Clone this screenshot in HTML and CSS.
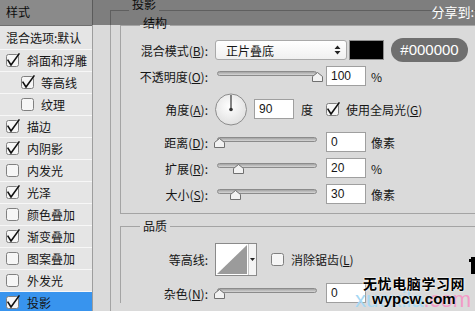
FILE: index.html
```html
<!DOCTYPE html>
<html lang="zh-CN">
<head>
    <meta charset="UTF-8">
    <meta name="viewport" content="width=device-width, initial-scale=1.0">
    <title>图层样式 - 投影</title>
    <link rel="stylesheet" href="styles.css">
</head>
<body>
    <div class="dialog">
        <div class="style-list">
            <div class="list-head">样式</div>
            <div class="list-row first">混合选项:默认</div>
            <div class="list-row"><span class="check on"></span>斜面和浮雕</div>
            <div class="list-row sub"><span class="check on"></span>等高线</div>
            <div class="list-row sub"><span class="check"></span>纹理</div>
            <div class="list-row"><span class="check on"></span>描边</div>
            <div class="list-row"><span class="check on"></span>内阴影</div>
            <div class="list-row"><span class="check"></span>内发光</div>
            <div class="list-row"><span class="check on"></span>光泽</div>
            <div class="list-row"><span class="check"></span>颜色叠加</div>
            <div class="list-row"><span class="check on"></span>渐变叠加</div>
            <div class="list-row"><span class="check"></span>图案叠加</div>
            <div class="list-row"><span class="check"></span>外发光</div>
            <div class="list-row selected"><span class="check on"></span>投影</div>
        </div>

        <div class="panel">
            <div class="group outer">
                <div class="group-title">投影</div>

                <div class="group inner">
                    <div class="group-title">结构</div>
                    <div class="rows">
                        <div class="row">
                            <span class="label">混合模式(<u>B</u>):</span>
                            <div class="select">
                                <span>正片叠底</span>
                                <svg class="select-arrows" width="7" height="10" viewBox="0 0 7 10">
                                    <path d="M3.5 0.5 L6.5 4 H0.5 Z M3.5 9.5 L6.5 6 H0.5 Z" fill="#222"/>
                                </svg>
                            </div>
                            <span class="swatch"></span>
                            <span class="hex">#000000</span>
                        </div>
                        <div class="row">
                            <span class="label">不透明度(<u>O</u>):</span>
                            <div class="slider" data-pos="100"></div>
                            <span class="field">100</span>
                            <span class="unit">%</span>
                        </div>
                        <div class="row tall">
                            <span class="label">角度(<u>A</u>):</span>
                            <svg class="dial" width="32" height="33" viewBox="0 0 32 33">
                                <defs>
                                    <radialGradient id="dial-fill" cx="0.45" cy="0.4" r="0.65">
                                        <stop offset="0" stop-color="#ffffff"/>
                                        <stop offset="1" stop-color="#dedede"/>
                                    </radialGradient>
                                </defs>
                                <circle cx="16" cy="16.5" r="15.5" fill="url(#dial-fill)" stroke="#8c8c8c"/>
                                <line x1="16" y1="16.5" x2="16" y2="2" stroke="#444" stroke-width="1.3"/>
                                <circle cx="16" cy="16.5" r="1.8" fill="#333"/>
                            </svg>
                            <span class="field">90</span>
                            <span class="unit">度</span>
                            <label class="option"><span class="check on"></span><span>使用全局光(<u>G</u>)</span></label>
                        </div>
                        <div class="row">
                            <span class="label">距离(<u>D</u>):</span>
                            <div class="slider" data-pos="2"></div>
                            <span class="field">0</span>
                            <span class="unit">像素</span>
                        </div>
                        <div class="row">
                            <span class="label">扩展(<u>R</u>):</span>
                            <div class="slider" data-pos="21"></div>
                            <span class="field">20</span>
                            <span class="unit">%</span>
                        </div>
                        <div class="row">
                            <span class="label">大小(<u>S</u>):</span>
                            <div class="slider" data-pos="18"></div>
                            <span class="field">30</span>
                            <span class="unit">像素</span>
                        </div>
                    </div>
                </div>

                <div class="group inner quality">
                    <div class="group-title">品质</div>
                    <div class="rows">
                        <div class="row contour">
                            <span class="label">等高线:</span>
                            <div class="contour-pick">
                                <svg width="32" height="31" viewBox="0 0 32 31">
                                    <path d="M1 30 L31 1 V30 Z" fill="#9b9b9b"/>
                                </svg>
                                <span class="contour-arrow">
                                    <svg width="5" height="3" viewBox="0 0 5 3"><path d="M0 0 H5 L2.5 3 Z" fill="#222"/></svg>
                                </span>
                            </div>
                            <label class="option"><span class="check"></span><span>消除锯齿(<u>L</u>)</span></label>
                        </div>
                        <div class="row">
                            <span class="label">杂色(<u>N</u>):</span>
                            <div class="slider" data-pos="2"></div>
                            <span class="field">0</span>
                        </div>
                    </div>
                </div>
            </div>
        </div>
    </div>

    <div class="share-bar">分享到:</div>

    <div class="wm-back">xuexila<span class="pink">.com</span></div>
    <div class="wm-cn">无忧电脑学习网</div>
    <div class="wm-en">wypcw.com</div>
    <svg class="wm-mark" width="7" height="17" viewBox="0 0 7 17">
        <path d="M2 0 H7 V17 H2 V5 H0 V2 H2 Z" fill="#000"/>
    </svg>

    <script>
        // Checkbox drawing, shared by the list and the options
        function checkbox(on) {
            const mark = on ? '<path d="M1.6 5.6 L5 11 L13.4 -0.6" fill="none" stroke="#111" stroke-width="1.6"/>' : '';
            return `<svg width="13" height="13" viewBox="0 0 13 13">
                <rect x="0.5" y="0.5" width="12" height="12" rx="2" fill="#f6f6f6" stroke="#808080"/>${mark}
            </svg>`;
        }

        document.querySelectorAll('.check').forEach(el => {
            el.innerHTML = checkbox(el.classList.contains('on'));
        });

        // Sliders: track plus a thumb placed from data-pos (percent)
        document.querySelectorAll('.slider').forEach(el => {
            const pos = Number(el.dataset.pos);
            el.innerHTML = `
                <div class="track"></div>
                <svg class="thumb" style="left: ${pos}%" width="11" height="10" viewBox="0 0 11 10">
                    <path d="M5.5 0.5 L10.5 4.5 V9.5 H0.5 V4.5 Z" fill="#f2f2f2" stroke="#707070"/>
                </svg>
            `;
        });
    </script>
</body>
</html>
```

FILE: styles.css
```css
* {
    box-sizing: border-box;
}
body {
    margin: 0;
    width: 475px;
    height: 311px;
    overflow: hidden;
    position: relative;
    background-color: #dadada;
    font-family: "Noto Sans CJK SC", "Liberation Sans", sans-serif;
    font-size: 12px;
    color: #161616;
}
.dialog {
    display: flex;
    height: 311px;
    overflow: hidden;
}

/* left list of layer styles */
.style-list {
    flex: none;
    width: 93px;
    background-color: #e5e5e5;
    border-right: 1px solid #9d9d9d;
}
.list-head {
    height: 26px;
    padding-left: 6px;
    line-height: 24px;
    background-color: #eeeeee;
    border-bottom: 1px solid #6f6f6f;
}
.list-row {
    display: flex;
    align-items: center;
    gap: 8px;
    height: 22px;
    padding-left: 6px;
    border-bottom: 1px solid #f7f7f7;
    white-space: nowrap;
}
.list-row.first {
    height: 24px;
}
.list-row.sub {
    padding-left: 21px;
    gap: 7px;
}
.list-row.selected {
    height: 20px;
    border-bottom: 0;
    background-color: #3894ee;
}
.check {
    display: block;
    flex: none;
    width: 13px;
    height: 13px;
}
.check svg {
    display: block;
    overflow: visible;
}

/* right settings panel */
.panel {
    flex: none;
    width: 400px;
    padding-left: 17px;
}
.group {
    border: 1px solid #a4a4a4;
}
.group.outer {
    margin-top: 10px;
    padding-left: 9px;
    height: 301px;
    border-right: 0;
    border-bottom: 0;
}
.group-title {
    width: max-content;
    padding: 0 3px;
    background-color: #dadada;
    line-height: 16px;
}
.outer > .group-title {
    margin: -14px 0 0 9px;
    line-height: 14px;
}
.inner {
    margin-top: 14px;
    padding-bottom: 9px;
}
.inner > .group-title {
    margin: -11px 0 0 19px;
}
.quality {
    margin-top: 12px;
    padding-bottom: 0;
    border-bottom: 0;
}
.quality > .group-title {
    margin-top: -9px;
}
.rows {
    display: flex;
    flex-direction: column;
    gap: 6px;
    padding-top: 9px;
}
.quality .rows {
    gap: 7px;
}
.row {
    display: flex;
    align-items: center;
    height: 20px;
    white-space: nowrap;
}
.row.tall {
    height: 34px;
}
.row.contour {
    height: 33px;
}
.label {
    flex: none;
    width: 87px;
    text-align: right;
}
.select {
    display: flex;
    align-items: center;
    justify-content: space-between;
    flex: none;
    width: 132px;
    height: 20px;
    margin-left: 7px;
    padding: 0 5px 0 10px;
    background: linear-gradient(#ffffff, #f0f0f0);
    border: 1px solid #a9a9a9;
    border-radius: 3px;
}
.swatch {
    flex: none;
    width: 35px;
    height: 20px;
    margin-left: 2px;
    background-color: #000;
    border: 1px solid #8d8d8d;
}
.hex {
    flex: none;
    width: 77px;
    height: 24px;
    margin-left: 7px;
    border-radius: 12px;
    background-color: #6f6f6f;
    color: #fff;
    font: 15px/24px "Liberation Sans", sans-serif;
    text-align: center;
}
.slider {
    position: relative;
    flex: none;
    width: 100px;
    height: 20px;
    margin-left: 9px;
}
.track {
    margin-top: 5px;
    height: 5px;
    border: 1px solid #8b8b8b;
    border-radius: 3px;
    background: linear-gradient(#a3a3a3, #d6d6d6);
}
.thumb {
    position: absolute;
    top: 6px;
    margin-left: -5px;
}
.field {
    flex: none;
    width: 40px;
    height: 20px;
    margin-left: 9px;
    padding-left: 4px;
    background-color: #fff;
    border: 1px solid #9f9f9f;
    font: 12px/18px "Liberation Sans", sans-serif;
}
.unit {
    margin-left: 5px;
}
.dial {
    flex: none;
    margin-left: 7px;
}
.tall .field {
    margin-left: 7px;
}
.tall .unit {
    margin-left: 7px;
}
.option {
    display: flex;
    align-items: center;
    gap: 7px;
    margin-left: 13px;
}
.quality .option {
    margin-left: 14px;
}
.contour-pick {
    display: flex;
    flex: none;
    width: 42px;
    height: 33px;
    margin-left: 7px;
    background-color: #fff;
    border: 1px solid #8a8a8a;
}
.contour-pick svg {
    display: block;
}
.contour-arrow {
    display: flex;
    align-items: center;
    justify-content: center;
    width: 8px;
    border-left: 1px solid #c4c4c4;
    background-color: #f4f4f4;
}

/* share bar laid over the top of the shot */
.share-bar {
    position: absolute;
    top: 0;
    left: 0;
    right: 0;
    height: 25px;
    padding-right: 1px;
    background-color: rgba(0, 0, 0, 0.42);
    color: #fff;
    font-size: 13px;
    line-height: 24px;
    text-align: right;
}

/* site watermark */
.wm-back {
    position: absolute;
    left: 355px;
    top: 289px;
    font: 22px/22px "Liberation Sans", sans-serif;
    color: #a6d8f4;
}
.wm-back .pink {
    color: #f39ac6;
}
.wm-cn {
    position: absolute;
    left: 363px;
    top: 275px;
    font-weight: bold;
    font-size: 14px;
    line-height: 16px;
    letter-spacing: 0.6px;
    color: #000;
    text-shadow: 0 0 2px #fff, 0 0 2px #fff;
}
.wm-en {
    position: absolute;
    left: 372px;
    top: 291px;
    font: bold 15px/16px "Liberation Sans", sans-serif;
    color: #000;
    text-shadow: 0 0 2px #fff;
}
.wm-mark {
    position: absolute;
    left: 469px;
    top: 257px;
}
```
